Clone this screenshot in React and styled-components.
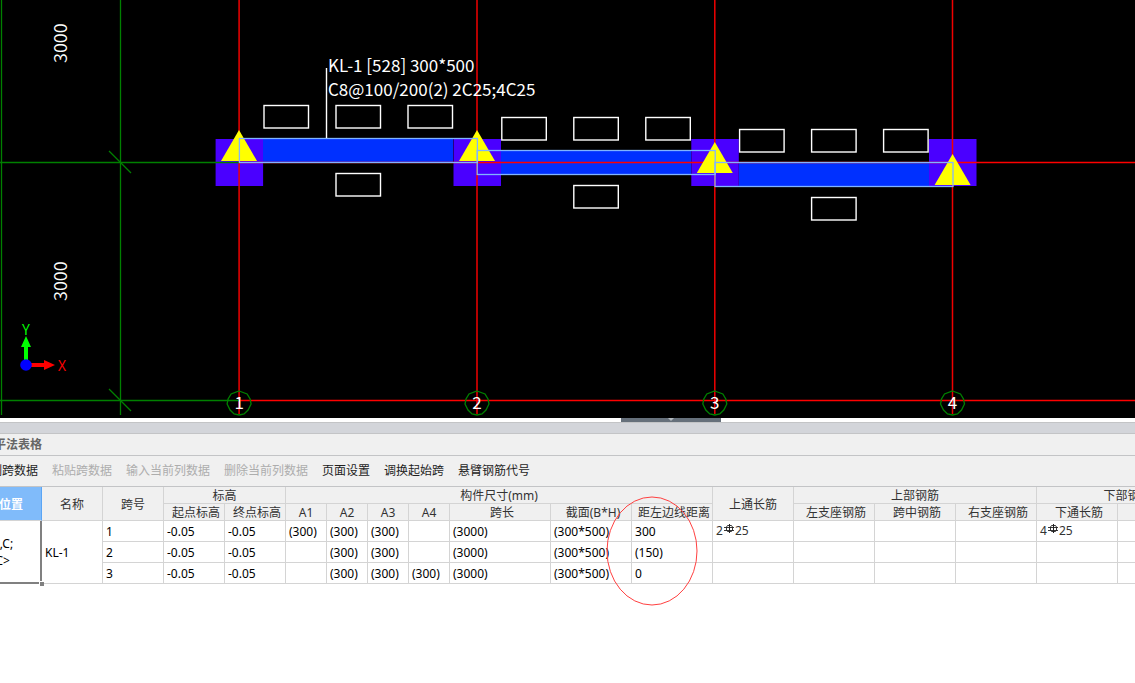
import React from 'react';
import styled, { createGlobalStyle } from 'styled-components';

const GlobalStyle = createGlobalStyle`
  html, body {
    margin: 0;
    padding: 0;
    background: #ffffff;
  }
  body {
    font-family: "Noto Sans", "Noto Sans CJK SC", sans-serif;
    font-size: 12px;
    color: #2b2b2b;
    overflow: hidden;
  }
  * {
    box-sizing: border-box;
  }
`;

const Page = styled.div`
  display: flex;
  flex-direction: column;
  min-height: 100vh;
  overflow: hidden;
`;

const Drawing = styled.svg`
  display: block;
  width: 100%;
  height: 418px;
  background: #000000;
  flex: none;
  font-family: "Noto Sans CJK SC", sans-serif;
  font-weight: 350;
`;

const Splitter = styled.div`
  display: flex;
  height: 4px;
  padding-left: 621px;
  background: #ffffff;
`;

const Grip = styled.button`
  display: flex;
  justify-content: center;
  width: 100px;
  height: 4px;
  padding: 0;
  border: 0;
  background: #66707b;
`;

const DockBar = styled.div`
  height: 12px;
  background: #d3d5da;
  border-top: 1px solid #c3c4c6;
  border-bottom: 1px solid #c3c4c6;
`;

const PanelTitle = styled.h2`
  height: 22px;
  margin: 0;
  margin-left: -6px;
  background: #f0f0f0;
  border-bottom: 1px solid #c3c4c6;
  color: #666666;
  font-size: 12px;
  font-weight: 700;
  line-height: 21px;
  white-space: nowrap;
`;

const Toolbar = styled.div`
  display: flex;
  align-items: center;
  gap: 14px;
  height: 31px;
  margin-left: -22px;
  background: #f0f0f0;
  border-bottom: 1px solid #c3c4c6;
`;

const ToolButton = styled.button`
  flex: none;
  padding: 0;
  border: 0;
  background: none;
  font: inherit;
  line-height: 18px;
  white-space: nowrap;
  color: ${({ disabled }) => (disabled ? '#adadad' : '#1e1e1e')};
`;

const TableArea = styled.div`
  position: relative;
  flex: 1;
`;

const Grid = styled.table`
  width: 1238px;
  margin-left: -19px;
  table-layout: fixed;
  border-collapse: separate;
  border-spacing: 0;
`;

const HeadCell = styled.th`
  height: 17px;
  padding: 0;
  padding-left: ${({ $sub }) => ($sub ? '4px' : '0')};
  background: ${({ $active }) => ($active ? '#80bbfa' : '#f0f0f0')};
  color: ${({ $active }) => ($active ? '#ffffff' : '#333333')};
  border-right: 1px solid ${({ $active }) => ($active ? '#5aa5f5' : '#d4d4d4')};
  border-bottom: 1px solid #d4d4d4;
  font-weight: ${({ $active }) => ($active ? 700 : 400)};
  line-height: 16px;
  text-align: center;
  white-space: nowrap;
`;

const HeadLabel = styled.span`
  display: block;
  height: 16px;
  line-height: 18px;
`;

const Cell = styled.td`
  position: relative;
  z-index: ${({ $selected }) => ($selected ? 1 : 'auto')};
  height: 21px;
  padding: 0 0 0 ${({ $selected }) => ($selected ? '5px' : '3px')};
  background: #ffffff;
  color: #000000;
  border-right: ${({ $selected }) => ($selected ? '2px solid #808080' : '1px solid #d4d4d4')};
  border-bottom: ${({ $selected }) => ($selected ? '2px solid #808080' : '1px solid #d4d4d4')};
  line-height: 17px;
  white-space: nowrap;
`;

const FillHandle = styled.span`
  position: absolute;
  right: -4px;
  bottom: -4px;
  width: 5px;
  height: 5px;
  background: #808080;
  border-top: 1px solid #ffffff;
  border-left: 1px solid #ffffff;
`;

const Rebar = styled.span`
  display: flex;
  align-items: flex-start;
  height: 18px;
  font-size: 12px;
  color: #333333;
`;

const Mark = styled.svg`
  position: absolute;
  left: 606px;
  top: 9px;
  width: 92px;
  height: 110px;
  pointer-events: none;
`;

const axes = [
  { n: 1, x: 239.1 },
  { n: 2, x: 477 },
  { n: 3, x: 714.8 },
  { n: 4, x: 952.5 },
];

const beams = [
  { x: 239, y: 138.5 },
  { x: 476.8, y: 150.5 },
  { x: 714.6, y: 162.5 },
];

const supports = [
  { x: 239, y: 130 },
  { x: 477, y: 130 },
  { x: 714.8, y: 142 },
  { x: 952.6, y: 154 },
];

const tools = [
  { label: '复制跨数据' },
  { label: '粘贴跨数据', disabled: true },
  { label: '输入当前列数据', disabled: true },
  { label: '删除当前列数据', disabled: true },
  { label: '页面设置' },
  { label: '调换起始跨' },
  { label: '悬臂钢筋代号' },
];

const columns = [61, 61, 61, 61, 61, 41, 41, 41, 41, 101, 81, 81, 81, 81, 81, 81, 81, 101];

const subHeads = [
  '起点标高', '终点标高', 'A1', 'A2', 'A3', 'A4', '跨长', '截面(B*H)', '距左边线距离',
  '左支座钢筋', '跨中钢筋', '右支座钢筋', '下通长筋', '侧面钢筋',
];

const rows = [
  { no: '1', a: ['(300)', '(300)', '(300)', ''], dist: '300', top: '2', bottom: '4' },
  { no: '2', a: ['', '(300)', '(300)', ''], dist: '(150)' },
  { no: '3', a: ['', '(300)', '(300)', '(300)'], dist: '0' },
];

// HRB400 bar sign between the count and the diameter
const RebarText = ({ count }) => (
  <Rebar>
    {count}
    <svg width="12" height="14" viewBox="0 0 12 14" fill="none" stroke="#222222">
      <path d="M6.5 2V11" />
      <path d="M1 5.5H11M1 8.5H11" strokeWidth="0.9" />
      <path d="M4.5 3.5H8.5L9.5 5V8L8.5 9.5H4.5L3.5 8V5Z" strokeWidth="0.9" />
    </svg>
    25
  </Rebar>
);

const Canvas = () => (
  <Drawing role="img" aria-label="KL-1">
    <g fill="#4a00ff">
      {axes.map((a) => (
        <rect key={a.n} x={a.x - 23.5} y="139" width="47.5" height="47" />
      ))}
    </g>
    <g fill="#0030ff">
      <rect x="263" y="139" width="190" height="23" />
      <rect x="501" y="151" width="190" height="23" />
      <rect x="739" y="163" width="190" height="23" />
    </g>
    <g stroke="#f00000">
      {axes.map((a) => (
        <line key={a.n} x1={a.x} x2={a.x} y1="0" y2="414" strokeWidth="1.5" />
      ))}
    </g>
    <g stroke="#ff0000" strokeWidth="1.3">
      <line x1="239" x2="100%" y1="162.5" y2="162.5" />
      <line x1="239" x2="100%" y1="400.5" y2="400.5" />
    </g>
    <g stroke="#008000" strokeWidth="1.3">
      <line x1="0" x2="239" y1="162.5" y2="162.5" />
      <line x1="0" x2="239" y1="400.5" y2="400.5" />
      <line x1="1.5" x2="1.5" y1="0" y2="415" />
      <line x1="120.5" x2="120.5" y1="0" y2="415" />
      <line x1="109" x2="131" y1="151" y2="173" />
      <line x1="109" x2="131" y1="389" y2="411" />
    </g>
    <g fill="#ffff00">
      {supports.map((s) => (
        <path key={s.x} d={`M${s.x} ${s.y}l18 31h-36z`} />
      ))}
    </g>
    <g fill="none" stroke="#80b4ff" strokeWidth="1.3">
      {beams.map((b) => (
        <rect key={b.x} x={b.x + 0.4} y={b.y} width="238" height="24" />
      ))}
    </g>
    <g fill="none" stroke="#ffffff" strokeWidth="1.4">
      {beams.map((b) => (
        <React.Fragment key={b.x}>
          <rect x={b.x + 25} y={b.y - 33} width="44.5" height="22.5" />
          <rect x={b.x + 97} y={b.y - 33} width="44.5" height="22.5" />
          <rect x={b.x + 169} y={b.y - 33} width="44.5" height="22.5" />
          <rect x={b.x + 97} y={b.y + 35} width="44.5" height="22.5" />
        </React.Fragment>
      ))}
      <line x1="326.5" x2="326.5" y1="68" y2="138" />
    </g>
    <g fill="#ffffff" fontSize="17" fontWeight="400">
      <text x="328" y="72">KL-1 [528] 300*500</text>
      <text x="328" y="96">C8@100/200(2) 2C25;4C25</text>
    </g>
    <g fill="#ffffff" fontSize="18">
      <text transform="translate(67 63) rotate(-90)">3000</text>
      <text transform="translate(67 301) rotate(-90)">3000</text>
    </g>
    {axes.map((a) => (
      <g key={a.n}>
        <path
          d={`M${a.x} 391l8 3 3 5 1 5-3 6-4 4-5 1-5-1-4-4-3-6 1-5 3-5z`}
          fill="none"
          stroke="#008000"
          strokeWidth="1.3"
        />
        <text x={a.x} y="409" fill="#ffffff" fontSize="17" fontWeight="400" textAnchor="middle">{a.n}</text>
      </g>
    ))}
    <path d="M24 360V347H21L26 336L31 347H28V360Z" fill="#00ff00" />
    <path d="M31 363H44V360L55 365L44 370V367H31Z" fill="#ff0000" />
    <circle cx="26" cy="365" r="5.8" fill="#0000ff" />
    <g fontSize="15" textAnchor="middle">
      <text x="26" y="335" fill="#00ff00">Y</text>
      <text x="62" y="371" fill="#ff0000">X</text>
    </g>
  </Drawing>
);

const Head = ({ children, ...rest }) => (
  <HeadCell {...rest}>
    <HeadLabel>{children}</HeadLabel>
  </HeadCell>
);

const SpanTable = () => (
  <Grid>
    <colgroup>
      {columns.map((w, i) => (
        <col key={i} style={{ width: w }} />
      ))}
    </colgroup>
    <thead>
      <tr>
        <Head rowSpan="2" $active>位置</Head>
        <Head rowSpan="2">名称</Head>
        <Head rowSpan="2">跨号</Head>
        <Head colSpan="2">标高</Head>
        <Head colSpan="7">构件尺寸(mm)</Head>
        <Head rowSpan="2">上通长筋</Head>
        <Head colSpan="3">上部钢筋</Head>
        <Head colSpan="2">下部钢筋</Head>
      </tr>
      <tr>
        {subHeads.map((h) => (
          <Head key={h} $sub={h.length > 2 || h === '跨长'}>{h}</Head>
        ))}
      </tr>
    </thead>
    <tbody>
      {rows.map((row, index) => (
        <tr key={row.no}>
          {index === 0 && (
            <>
              <Cell rowSpan="3" $selected>
                &lt;1,C;<br />4,C&gt;
                <FillHandle />
              </Cell>
              <Cell rowSpan="3">KL-1</Cell>
            </>
          )}
          <Cell>{row.no}</Cell>
          <Cell>-0.05</Cell>
          <Cell>-0.05</Cell>
          {row.a.map((value, i) => (
            <Cell key={i}>{value}</Cell>
          ))}
          <Cell>(3000)</Cell>
          <Cell>(300*500)</Cell>
          <Cell>{row.dist}</Cell>
          <Cell>{row.top && <RebarText count={row.top} />}</Cell>
          <Cell />
          <Cell />
          <Cell />
          <Cell>{row.bottom && <RebarText count={row.bottom} />}</Cell>
          <Cell />
        </tr>
      ))}
    </tbody>
  </Grid>
);

const App = () => {
  return (
    <>
      <GlobalStyle />
      <Page>
        <Canvas />
        <Splitter>
          <Grip aria-label="收起">
            <svg width="8" height="4" viewBox="0 0 8 4">
              <path d="M1 0H7L4 3Z" fill="#b4bac0" />
            </svg>
          </Grip>
        </Splitter>
        <DockBar />
        <PanelTitle>平法表格</PanelTitle>
        <Toolbar>
          {tools.map((tool) => (
            <ToolButton key={tool.label} disabled={tool.disabled}>{tool.label}</ToolButton>
          ))}
        </Toolbar>
        <TableArea>
          <SpanTable />
          <Mark viewBox="0 0 92 110" aria-hidden="true">
            <ellipse cx="46" cy="55" rx="45" ry="54" fill="none" stroke="#ff4040" />
          </Mark>
        </TableArea>
      </Page>
    </>
  );
};

export default App;
